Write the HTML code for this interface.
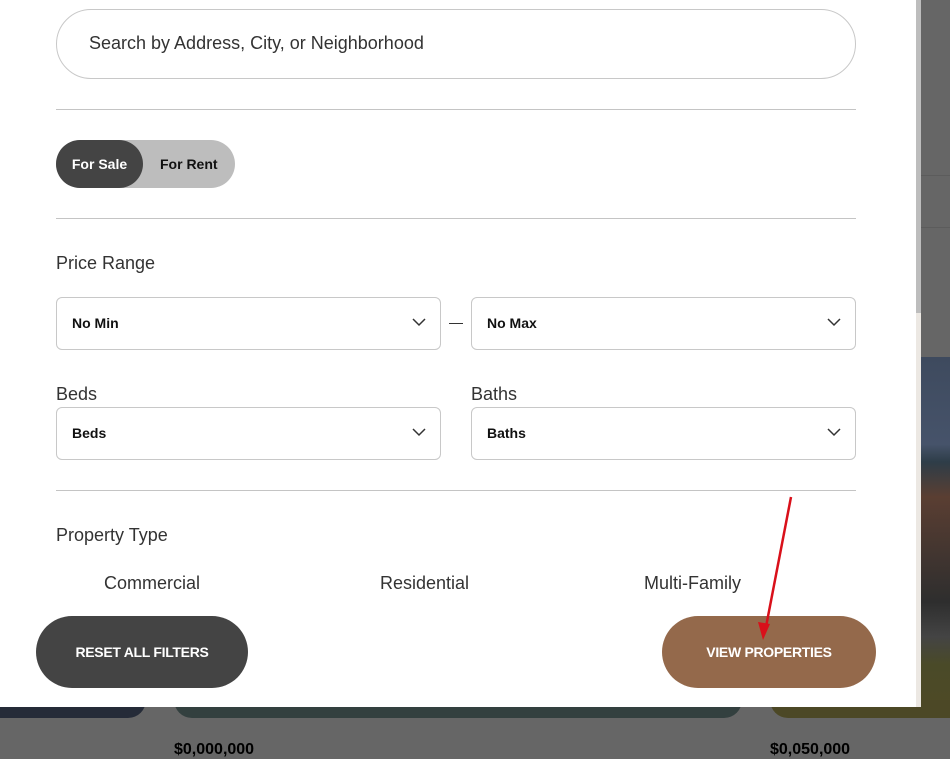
<!DOCTYPE html>
<html><head><meta charset="utf-8"><style>
*{margin:0;padding:0;box-sizing:border-box}
body{width:950px;height:745px;overflow:hidden;background:#666;font-family:"Liberation Sans",sans-serif;position:relative}
.abs{position:absolute}
.panel{left:0;top:0;width:916px;height:707px;background:#fff}
.hr{position:absolute;left:56px;width:800px;height:1px;background:#c4c4c4}
.sel{position:absolute;height:53px;border:1px solid #c8c8c8;border-radius:6px;font-weight:bold;font-size:14px;color:#111;padding:17px 0 0 15px}
.sel svg{position:absolute;right:14px;top:20px}
.lbl{position:absolute;font-size:18px;color:#333;font-weight:300}
.btn{position:absolute;top:616px;height:72px;border-radius:36px;color:#fff;font-weight:bold;font-size:14px;text-align:center;line-height:72px;letter-spacing:-0.3px}
</style></head><body>
<div class="abs" style="left:921px;top:175px;width:29px;height:1px;background:#5c5c5c"></div>
<div class="abs" style="left:921px;top:227px;width:29px;height:1px;background:#5c5c5c"></div>
<div class="abs" style="left:921px;top:357px;width:29px;height:350px;background:linear-gradient(#3e4a5e 0,#46536a 25%,#2e3d48 30%,#5a3e32 40%,#2e2e2e 70%,#444 80%,#4a4a28 88%,#4e4a26 100%)"></div>
<div class="abs" style="left:0;top:700px;width:146px;height:18px;border-radius:0 0 18px 0;background:#252b38"></div>
<div class="abs" style="left:174px;top:700px;width:568px;height:18px;border-radius:0 0 18px 18px;background:#33403f"></div>
<div class="abs" style="left:770px;top:700px;width:180px;height:18px;border-radius:0 0 0 18px;background:#4c4826"></div>
<div class="abs" style="left:174px;top:741px;font-size:16px;font-weight:bold;color:#000">$0,000,000</div>
<div class="abs" style="left:770px;top:741px;font-size:16px;font-weight:bold;color:#000">$0,050,000</div>
<div class="abs panel"></div>
<div class="abs" style="left:916px;top:0;width:5px;height:707px;background:#ece8e3"></div>
<div class="abs" style="left:916px;top:0;width:5px;height:313px;background:#bdbdbd"></div>
<div class="abs" style="left:56px;top:9px;width:800px;height:70px;border:1px solid #c8c8c8;border-radius:35px;font-size:18px;color:#333;padding:23px 0 0 32px;font-weight:300">Search by Address, City, or Neighborhood</div>
<div class="hr" style="top:109px"></div>
<div class="abs" style="left:56px;top:140px;width:179px;height:48px;border-radius:24px;background:#bdbdbd"></div>
<div class="abs" style="left:56px;top:140px;width:87px;height:48px;border-radius:24px;background:#444;color:#fff;font-weight:bold;font-size:14px;text-align:center;line-height:48px">For Sale</div>
<div class="abs" style="left:160px;top:140px;font-weight:bold;font-size:14px;line-height:48px;color:#111">For Rent</div>
<div class="hr" style="top:218px"></div>
<div class="lbl" style="left:56px;top:253px">Price Range</div>
<div class="sel" style="left:56px;top:297px;width:385px">No Min<svg width="14" height="9"><path d="M1 1L7 7L13 1" stroke="#333" stroke-width="1.5" fill="none"/></svg></div>
<div class="abs" style="left:449px;top:323px;width:14px;height:1px;background:#333"></div>
<div class="sel" style="left:471px;top:297px;width:385px">No Max<svg width="14" height="9"><path d="M1 1L7 7L13 1" stroke="#333" stroke-width="1.5" fill="none"/></svg></div>
<div class="lbl" style="left:56px;top:384px">Beds</div>
<div class="lbl" style="left:471px;top:384px">Baths</div>
<div class="sel" style="left:56px;top:407px;width:385px">Beds<svg width="14" height="9"><path d="M1 1L7 7L13 1" stroke="#333" stroke-width="1.5" fill="none"/></svg></div>
<div class="sel" style="left:471px;top:407px;width:385px">Baths<svg width="14" height="9"><path d="M1 1L7 7L13 1" stroke="#333" stroke-width="1.5" fill="none"/></svg></div>
<div class="hr" style="top:490px"></div>
<div class="lbl" style="left:56px;top:525px">Property Type</div>
<div class="lbl" style="left:104px;top:573px">Commercial</div>
<div class="lbl" style="left:380px;top:573px">Residential</div>
<div class="lbl" style="left:644px;top:573px">Multi-Family</div>
<div class="btn" style="left:36px;width:212px;background:#444">RESET ALL FILTERS</div>
<div class="btn" style="left:662px;width:214px;background:#94694b">VIEW PROPERTIES</div>
<svg class="abs" style="left:0;top:0" width="950" height="745"><path d="M791 497L765 632" stroke="#d9101a" stroke-width="2.5" fill="none"/><path d="M763 640L758 622L770 624Z" fill="#d9101a"/></svg>
</body></html>
